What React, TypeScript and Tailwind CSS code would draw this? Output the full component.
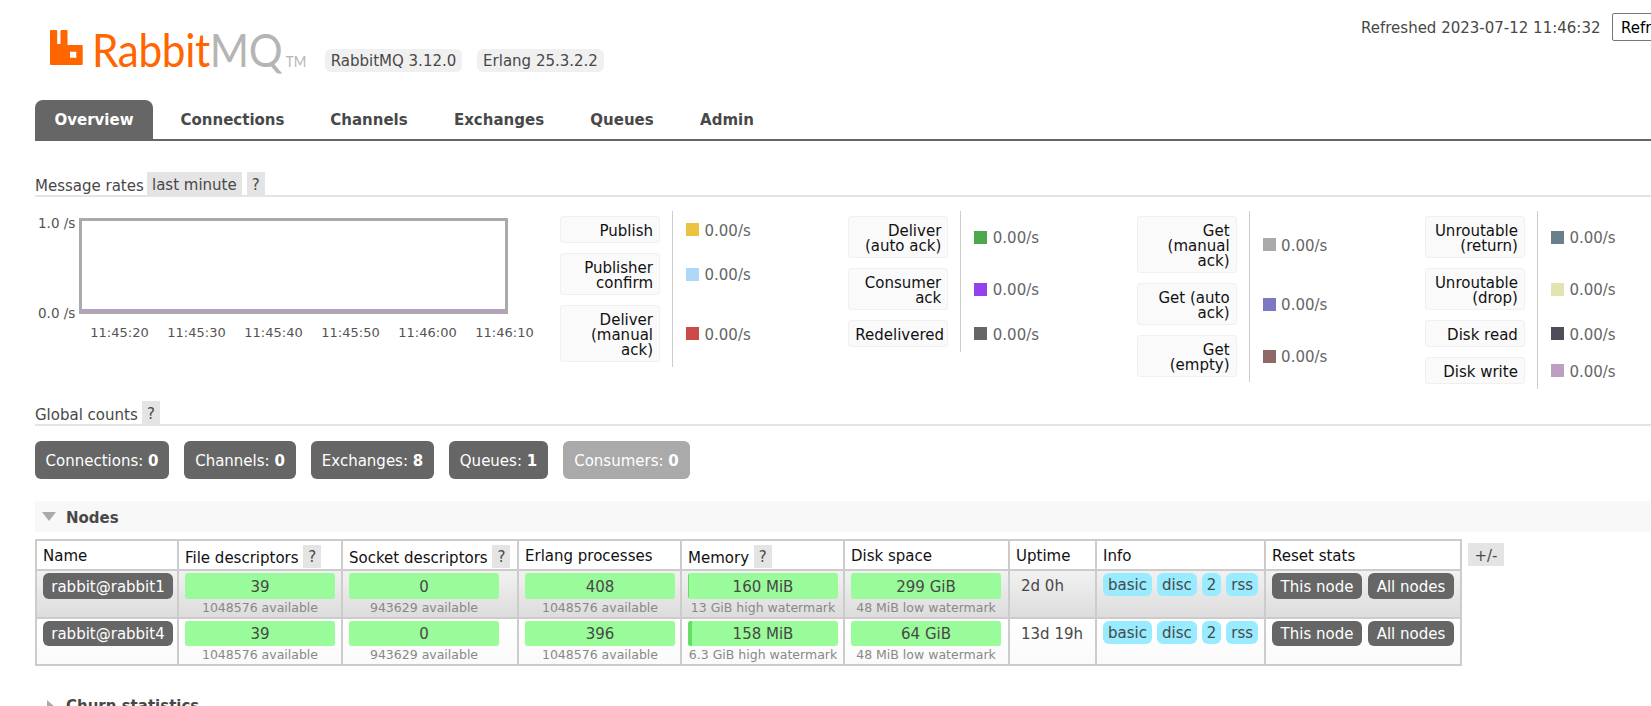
const tabs = [
  ["Connections", "w-[141px]"],
  ["Channels", "w-[116px]"],
  ["Exchanges", "w-[128px]"],
  ["Queues", "w-[102px]"],
  ["Admin", "w-[92px]"],
];

const legend = [
  [
    ["Publish", "#edc240", 27],
    ["Publisher confirm", "#afd8f8", 42],
    ["Deliver (manual ack)", "#cb4b4b", 57],
  ],
  [
    ["Deliver (auto ack)", "#4da74d", 42],
    ["Consumer ack", "#9440ed", 42],
    ["Redelivered", "#666666", 27],
  ],
  [
    ["Get (manual ack)", "#aaaaaa", 57],
    ["Get (auto ack)", "#7c79c3", 42],
    ["Get (empty)", "#8e6767", 42],
  ],
  [
    ["Unroutable (return)", "#67808c", 42],
    ["Unroutable (drop)", "#e4e4b3", 42],
    ["Disk read", "#4f4d5a", 27],
    ["Disk write", "#bc9fc1", 27],
  ],
] as [string, string, number][][];

const counts = [
  ["Connections", "0", "w-[134px] bg-[#666]"],
  ["Channels", "0", "w-[112px] bg-[#666]"],
  ["Exchanges", "8", "w-[123px] bg-[#666]"],
  ["Queues", "1", "w-[99px] bg-[#666]"],
  ["Consumers", "0", "w-[127px] bg-[#aaa]"],
];

const nodes = [
  {
    name: "rabbit@rabbit1",
    row: "bg-gradient-to-b from-[#f2f2f2] to-[#dcdcdc] h-[48px]",
    barH: "h-[26px]",
    fd: "39",
    sock: "0",
    proc: "408",
    mem: "160 MiB",
    sliver: "w-[1px]",
    mark: "13 GiB high watermark",
    disk: "299 GiB",
    uptime: "2d 0h",
  },
  {
    name: "rabbit@rabbit4",
    row: "bg-gradient-to-b from-white to-[#fafafa] h-[47px]",
    barH: "h-[25px]",
    fd: "39",
    sock: "0",
    proc: "396",
    mem: "158 MiB",
    sliver: "w-[4px]",
    mark: "6.3 GiB high watermark",
    disk: "64 GiB",
    uptime: "13d 19h",
  },
];

function Help({ label = "?" }: { label?: string }) {
  return <span className="inline-flex h-[23px] items-center bg-[#e4e4e4] px-[5px] pt-[3px] text-[#484848]">{label}</span>;
}

function Bar({ value, sub, barH, sliver }: { value: string; sub: string; barH: string; sliver?: string }) {
  return (
    <div className="w-[150px] text-center">
      <div className={`relative flex w-[150px] items-center justify-center overflow-hidden rounded-[3px] bg-[#99fb99] pt-[2px] text-[#484848] ${barH}`}>
        {sliver && <span className={`absolute inset-y-0 left-0 bg-[#66dd66] ${sliver}`} />}
        {value}
      </div>
      <div className="mt-[1px] flex justify-center whitespace-nowrap text-[12.5px] leading-[16px] text-[#888]">{sub}</div>
    </div>
  );
}

function Th({ children }: { children: React.ReactNode }) {
  return <th className="h-[30px] border-2 border-[#ccc] px-[6px] pt-[2px] text-left font-normal whitespace-nowrap text-[#111]">{children}</th>;
}

function Td({ children }: { children: React.ReactNode }) {
  return <td className="border-2 border-[#ccc] px-[6px] pt-[2px] pb-0 align-top">{children}</td>;
}

function Heading({ children }: { children: React.ReactNode }) {
  return <div className="ml-[35px] flex h-[24px] items-end border-b-2 border-[#e5e5e5]">{children}</div>;
}

export default function App() {
  return (
    <div className="h-[706px] w-[1651px] overflow-hidden bg-white font-['DejaVu_Sans','Verdana',sans-serif] text-[15px] leading-[15px] text-[#484848]">
      <div className="w-[1800px]">
        <header className="flex h-[100px] items-start">
          <div className="flex w-[1361px] items-start pl-[50px] pt-[30px]">
            <svg width="33" height="35" viewBox="0 0 33 35" className="shrink-0">
              <path
                fill="#ff6600"
                fillRule="evenodd"
                d="M1 0h5.200a1 1 0 0 1 1 1v13h3.300V1a1 1 0 0 1 1-1h5a1 1 0 0 1 1 1v14h14.200a1 1 0 0 1 1 1v18a1 1 0 0 1-1 1H1a1 1 0 0 1-1-1V1a1 1 0 0 1 1-1zM20 21.700v6h6.300v-6z"
              />
            </svg>
            <div className="-mt-[1px] ml-[9px] flex h-[40px] w-[215px] shrink-0 origin-left scale-x-[0.9] items-baseline font-['Lato',sans-serif] text-[47px] leading-[40px] font-normal tracking-[-0.4px]">
              <span className="text-[#ff6600]">Rabbit</span>
              <span className="text-[#b5b5b5]">MQ</span>
              <span className="ml-[4px] text-[15px] leading-none tracking-normal text-[#b5b5b5]">TM</span>
            </div>
            <div className="mt-[19px] ml-[18px] flex gap-[15px]">
              <span className="flex h-[23px] w-[137px] items-center justify-center rounded-[6px] bg-[#f0f0f0] pt-[2px] whitespace-nowrap">RabbitMQ 3.12.0</span>
              <span className="flex h-[23px] w-[127px] items-center justify-center rounded-[6px] bg-[#f0f0f0] pt-[2px] whitespace-nowrap">Erlang 25.3.2.2</span>
            </div>
          </div>
          <div className="mt-[21px] w-[251px] whitespace-nowrap">Refreshed 2023-07-12 11:46:32</div>
          <div className="mt-[13px] h-[28px] w-[100px] rounded-[2px] border border-[#767676] px-[8px] py-[7px] text-black">Refresh</div>
        </header>

        <nav className="ml-[35px] flex h-[41px] gap-[8px] border-b-2 border-[#666] font-bold">
          <a className="flex h-[39px] w-[118px] items-center justify-center rounded-t-[8px] bg-[#666] pt-[2px] text-white">Overview</a>
          {tabs.map(([t, w]) => (
            <a key={t} className={`flex h-[39px] items-center justify-center pt-[2px] pl-[2px] ${w}`}>
              {t}
            </a>
          ))}
        </nav>

        <div className="mt-[32px]">
          <Heading>
            <span className="w-[112px] pb-[1px]">Message rates</span>
            <Help label="last minute" />
            <span className="ml-[5px]">
              <Help />
            </span>
          </Heading>
        </div>

        <section className="mt-[14px] ml-[35px] flex h-[178px]">
          <div className="w-[525px] shrink-0 pt-[7px] text-[13px] text-[#545454]">
            <div className="flex">
              <div className="-mt-[2px] flex h-[105px] w-[44px] flex-col justify-between pl-[3px] text-[13.5px]">
                <span>1.0 /s</span>
                <span>0.0 /s</span>
              </div>
              <div className="h-[96px] w-[429px] border-[3px] border-b-2 border-[#aaa] shadow-[inset_0_-3px_0_#b79fbf]" />
            </div>
            <div className="mt-[4px] ml-[46px] flex">
              {["11:45:20", "11:45:30", "11:45:40", "11:45:50", "11:46:00", "11:46:10"].map((t) => (
                <span key={t} className="w-[77px] text-center">
                  {t}
                </span>
              ))}
            </div>
          </div>
          {legend.map((col, i) => (
            <div key={i} className="w-[288.300px] shrink-0">
              {col.map(([label, color, h]) => (
                <div key={label} className="flex">
                  <div className="w-[100px] py-[5px]">
                    <div
                      className="rounded-[3px] border border-[#f0f0f0] bg-[#fafafa] px-[6px] pt-[7px] text-right text-[#111]"
                      style={{ height: h }}
                    >
                      {label}
                    </div>
                  </div>
                  <div className="ml-[12px] flex items-center gap-[5.500px] border-l border-[#ccc] pl-[13px] text-[#666]">
                    <span className="h-[13px] w-[13px]" style={{ backgroundColor: color }} />
                    <span className="pt-[3px]">0.00/s</span>
                  </div>
                </div>
              ))}
            </div>
          ))}
        </section>

        <div className="mt-[13px]">
          <Heading>
            <span className="w-[107px] pb-[1px]">Global counts</span>
            <Help />
          </Heading>
        </div>
        <div className="mt-[15px] ml-[35px] flex gap-[15px]">
          {counts.map(([label, n, cls]) => (
            <div key={label} className={`flex h-[38px] items-center justify-center rounded-[6px] pt-[3px] whitespace-nowrap text-white ${cls}`}>
              {label}:&nbsp;<b className="font-bold">{n}</b>
            </div>
          ))}
        </div>

        <section className="mt-[22px] ml-[35px]">
          <div className="flex h-[31px] items-center bg-[#f8f8f8] pl-[7px] font-bold">
            <span className="h-0 w-0 border-x-[7px] border-t-[9px] border-x-transparent border-t-[#aaa]" />
            <span className="ml-[10px] pt-[3px]">Nodes</span>
          </div>
          <div className="mt-[7px] flex items-start">
            <table className="w-[1425px] table-fixed border-collapse border-2 border-[#ccc]">
              <colgroup>
                <col className="w-[142px]" />
                <col className="w-[164px]" />
                <col className="w-[176px]" />
                <col className="w-[163px]" />
                <col className="w-[163px]" />
                <col className="w-[165px]" />
                <col className="w-[87px]" />
                <col className="w-[169px]" />
                <col className="w-[196px]" />
              </colgroup>
              <thead>
                <tr>
                  <Th>Name</Th>
                  <Th>
                    File descriptors <Help />
                  </Th>
                  <Th>
                    Socket descriptors <Help />
                  </Th>
                  <Th>Erlang processes</Th>
                  <Th>
                    Memory <Help />
                  </Th>
                  <Th>Disk space</Th>
                  <Th>Uptime</Th>
                  <Th>Info</Th>
                  <Th>Reset stats</Th>
                </tr>
              </thead>
              <tbody>
                {nodes.map((n) => (
                  <tr key={n.name} className={n.row}>
                    <Td>
                      <span className={`flex w-[130px] items-center justify-center rounded-[6px] bg-[#666] pt-[2px] text-white ${n.barH}`}>{n.name}</span>
                    </Td>
                    <Td>
                      <Bar value={n.fd} sub="1048576 available" barH={n.barH} />
                    </Td>
                    <Td>
                      <Bar value={n.sock} sub="943629 available" barH={n.barH} />
                    </Td>
                    <Td>
                      <Bar value={n.proc} sub="1048576 available" barH={n.barH} />
                    </Td>
                    <Td>
                      <Bar value={n.mem} sub={n.mark} barH={n.barH} sliver={n.sliver} />
                    </Td>
                    <Td>
                      <Bar value={n.disk} sub="48 MiB low watermark" barH={n.barH} />
                    </Td>
                    <Td>
                      <div className="pt-[6px] pl-[5px] whitespace-nowrap">{n.uptime}</div>
                    </Td>
                    <Td>
                      <div className="flex gap-[5px]">
                        {["basic", "disc", "2", "rss"].map((b) => (
                          <span key={b} className="flex h-[23px] items-center rounded-[6px] bg-[#99ebff] px-[5px] pt-[2px] text-[#484848]">
                            {b}
                          </span>
                        ))}
                      </div>
                    </Td>
                    <Td>
                      <div className="flex gap-[6px]">
                        <span className={`flex w-[90px] items-center justify-center rounded-[6px] bg-[#666] pt-[2px] whitespace-nowrap text-white ${n.barH}`}>This node</span>
                        <span className={`flex w-[86px] items-center justify-center rounded-[6px] bg-[#666] pt-[2px] whitespace-nowrap text-white ${n.barH}`}>All nodes</span>
                      </div>
                    </Td>
                  </tr>
                ))}
              </tbody>
            </table>
            <span className="mt-[4px] ml-[6px] flex h-[23px] w-[36px] items-center justify-center bg-[#e4e4e4] pt-[3px]">+/-</span>
          </div>
          <div className="mt-[25px] flex h-[31px] items-center pl-[12px] font-bold">
            <span className="h-0 w-0 border-y-[7px] border-l-[8px] border-y-transparent border-l-[#aaa]" />
            <span className="ml-[11px]">Churn statistics</span>
          </div>
        </section>
      </div>
    </div>
  );
}
